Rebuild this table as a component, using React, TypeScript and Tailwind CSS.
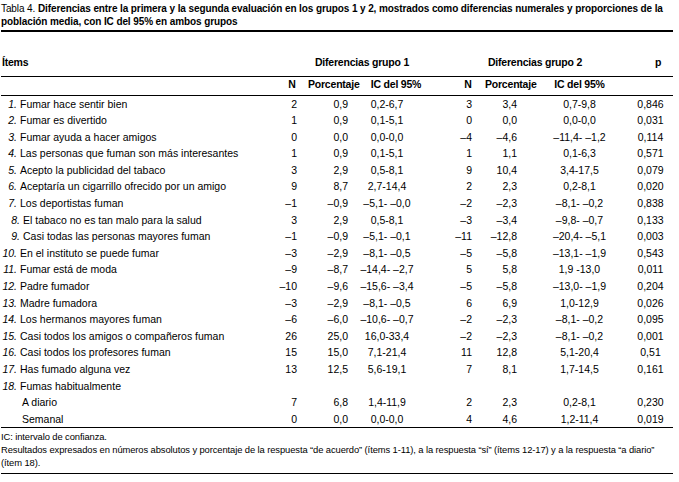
type Item = {
  num?: string
  label: string
  shift?: boolean
  sub?: boolean
  v?: string[]
}

// N1, %1, IC1, N2, %2, IC2, p
const items: Item[] = [
  { num: '1.', label: 'Fumar hace sentir bien', v: ['2', '0,9', '0,2-6,7', '3', '3,4', '0,7-9,8', '0,846'] },
  { num: '2.', label: 'Fumar es divertido', v: ['1', '0,9', '0,1-5,1', '0', '0,0', '0,0-0,0', '0,031'] },
  { num: '3.', label: 'Fumar ayuda a hacer amigos', v: ['0', '0,0', '0,0-0,0', '–4', '–4,6', '–11,4- –1,2', '0,114'] },
  { num: '4.', label: 'Las personas que fuman son más interesantes', v: ['1', '0,9', '0,1-5,1', '1', '1,1', '0,1-6,3', '0,571'] },
  { num: '5.', label: 'Acepto la publicidad del tabaco', v: ['3', '2,9', '0,5-8,1', '9', '10,4', '3,4-17,5', '0,079'] },
  { num: '6.', label: 'Aceptaría un cigarrillo ofrecido por un amigo', v: ['9', '8,7', '2,7-14,4', '2', '2,3', '0,2-8,1', '0,020'] },
  { num: '7.', label: 'Los deportistas fuman', v: ['–1', '–0,9', '–5,1- –0,0', '–2', '–2,3', '–8,1- –0,2', '0,838'] },
  { num: '8.', label: 'El tabaco no es tan malo para la salud', shift: true, v: ['3', '2,9', '0,5-8,1', '–3', '–3,4', '–9,8- –0,7', '0,133'] },
  { num: '9.', label: 'Casi todas las personas mayores fuman', shift: true, v: ['–1', '–0,9', '–5,1- –0,1', '–11', '–12,8', '–20,4- –5,1', '0,003'] },
  { num: '10.', label: 'En el instituto se puede fumar', v: ['–3', '–2,9', '–8,1- –0,5', '–5', '–5,8', '–13,1- –1,9', '0,543'] },
  { num: '11.', label: 'Fumar está de moda', v: ['–9', '–8,7', '–14,4- –2,7', '5', '5,8', '1,9 -13,0', '0,011'] },
  { num: '12.', label: 'Padre fumador', v: ['–10', '–9,6', '–15,6- –3,4', '–5', '–5,8', '–13,0- –1,9', '0,204'] },
  { num: '13.', label: 'Madre fumadora', v: ['–3', '–2,9', '–8,1- –0,5', '6', '6,9', '1,0-12,9', '0,026'] },
  { num: '14.', label: 'Los hermanos mayores fuman', v: ['–6', '–6,0', '–10,6- –0,7', '–2', '–2,3', '–8,1- –0,2', '0,095'] },
  { num: '15.', label: 'Casi todos los amigos o compañeros fuman', v: ['26', '25,0', '16,0-33,4', '–2', '–2,3', '–8,1- –0,2', '0,001'] },
  { num: '16.', label: 'Casi todos los profesores fuman', v: ['15', '15,0', '7,1-21,4', '11', '12,8', '5,1-20,4', '0,51'] },
  { num: '17.', label: 'Has fumado alguna vez', v: ['13', '12,5', '5,6-19,1', '7', '8,1', '1,7-14,5', '0,161'] },
  { num: '18.', label: 'Fumas habitualmente' },
  { label: 'A diario', sub: true, v: ['7', '6,8', '1,4-11,9', '2', '2,3', '0,2-8,1', '0,230'] },
  { label: 'Semanal', sub: true, v: ['0', '0,0', '0,0-0,0', '4', '4,6', '1,2-11,4', '0,019'] },
]

const cols = 'grid grid-cols-[275px_32px_50px_76px_51px_48px_93px_47px]'

// per-column alignment of the data cells
const cellCls = [
  'text-right pr-[11px]',
  'text-right pr-[10px]',
  'text-center pr-[18px]',
  'text-right pr-[13px]',
  'text-right pr-[16px]',
  'text-center',
  'text-center pl-[2px]',
]

export default function App() {
  return (
    <div className="w-[679px] h-[482px] overflow-hidden bg-white text-black pt-[3px] pl-[1px] font-['Liberation_Sans',Arial,sans-serif]">
      <div className="w-[672px]">
        <p className="text-[10px] leading-[12.5px] tracking-[-0.01em] whitespace-nowrap">
          Tabla 4. <b>Diferencias entre la primera y la segunda evaluación en los grupos 1 y 2, mostrados como diferencias numerales y proporciones de la</b>
          <br />
          <b>población media, con IC del 95% en ambos grupos</b>
        </p>
        <div className="mt-[2px] h-[1.5px] bg-black" />

        {/* header rows */}
        <div className={`${cols} h-[45px] items-end pb-[8px] border-b border-black text-[10.5px] leading-[12px] font-bold tracking-[-0.02em]`}>
          <div className="pl-[1px]">Ítems</div>
          <div className="col-span-3 text-center pl-[14px] whitespace-nowrap">Diferencias grupo 1</div>
          <div className="col-span-3 text-center pl-[10px] whitespace-nowrap">Diferencias grupo 2</div>
          <div className="text-center pl-[17px]">p</div>
        </div>
        <div className={`${cols} h-[19px] pt-[1.5px] border-b border-black text-[10.5px] leading-[12px] font-bold tracking-[-0.02em] whitespace-nowrap`}>
          <div />
          <div className="text-center">N</div>
          <div className="text-center">Porcentaje</div>
          <div className="text-center">IC del 95%</div>
          <div className="text-center pl-[17px]">N</div>
          <div className="text-center">Porcentaje</div>
          <div className="text-center">IC del 95%</div>
          <div />
        </div>

        {/* data rows */}
        <div className="border-b border-black text-[10.5px] leading-[16.6px]">
          {items.map((it, i) => (
            <div key={i} className={`${cols} h-[16.6px] whitespace-nowrap`}>
              <div className={`flex ${it.shift ? 'pl-[3px]' : ''} ${it.sub ? 'pl-[21px]' : ''}`}>
                {it.num && <span className="inline-block w-[16px] text-right italic">{it.num}</span>}
                <span className={it.num ? 'ml-[3px]' : ''}>{it.label}</span>
              </div>
              {it.v
                ? it.v.map((val, j) => (
                    <div key={j} className={cellCls[j]}>
                      {val}
                    </div>
                  ))
                : null}
            </div>
          ))}
        </div>

        {/* notes */}
        <div className="pt-[1.5px] pb-[4.5px] border-b border-black text-[9.4px] leading-[13px] tracking-[-0.01em] whitespace-nowrap">
          <p>IC: intervalo de confianza.</p>
          <p>
            Resultados expresados en números absolutos y porcentaje de la respuesta “de acuerdo” (ítems 1-11), a la respuesta “sí” (ítems 12-17) y a la respuesta “a diario”
            <br />
            (ítem 18).
          </p>
        </div>
      </div>
    </div>
  )
}
